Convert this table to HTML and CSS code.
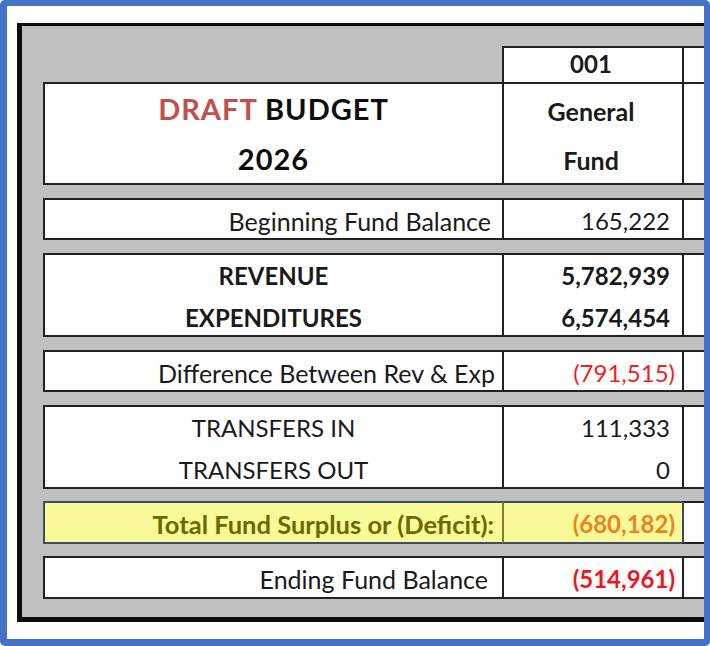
FILE: index.html
```html
<!DOCTYPE html>
<html lang="en">
<head>
<meta charset="utf-8">
<title>Draft Budget 2026</title>
<link rel="stylesheet" href="styles.css">
</head>
<body>
<div class="frame">
  <div class="panel">
    <div class="row row-code">
      <div class="cell lbl blank"></div>
      <div class="cell val center code">001</div>
      <div class="cell ext"></div>
    </div>
    <div class="row row-head">
      <div class="cell lbl title">
        <div class="title-line"><span class="draft">DRAFT</span> BUDGET</div>
        <div class="title-line">2026</div>
      </div>
      <div class="cell val center fundname">
        <div class="fund-line">General</div>
        <div class="fund-line">Fund</div>
      </div>
      <div class="cell ext"></div>
    </div>
    <div class="row row-single">
      <div class="cell lbl right wide pad-begin">Beginning Fund Balance</div>
      <div class="cell val num"><span class="pos">165,222</span></div>
      <div class="cell ext"></div>
    </div>
    <div class="row row-double">
      <div class="cell lbl center bold">
        <div class="line">REVENUE</div>
        <div class="line">EXPENDITURES</div>
      </div>
      <div class="cell val num bold">
        <div class="line"><span class="pos">5,782,939</span></div>
        <div class="line"><span class="pos">6,574,454</span></div>
      </div>
      <div class="cell ext"></div>
    </div>
    <div class="row row-single">
      <div class="cell lbl right wide pad-diff">Difference Between Rev &amp; Exp</div>
      <div class="cell val num neg">(791,515)</div>
      <div class="cell ext"></div>
    </div>
    <div class="row row-double">
      <div class="cell lbl center">
        <div class="line">TRANSFERS IN</div>
        <div class="line">TRANSFERS OUT</div>
      </div>
      <div class="cell val num">
        <div class="line"><span class="pos">111,333</span></div>
        <div class="line"><span class="pos">0</span></div>
      </div>
      <div class="cell ext"></div>
    </div>
    <div class="row row-single row-total">
      <div class="cell lbl right pad-total total-lbl">Total Fund Surplus or (Deficit):</div>
      <div class="cell val num total-val">(680,182)</div>
      <div class="cell ext"></div>
    </div>
    <div class="row row-single row-end">
      <div class="cell lbl right wide pad-end">Ending Fund Balance</div>
      <div class="cell val num end-val">(514,961)</div>
      <div class="cell ext"></div>
    </div>
  </div>
</div>
</body>
</html>
```

FILE: styles.css
```css
html, body {
  margin: 0;
  padding: 0;
  background: #ffffff;
}

.frame {
  box-sizing: border-box;
  width: 710px;
  height: 646px;
  border: 6px solid #4472c4;
  border-left-width: 7px;
  border-bottom-width: 7px;
  border-radius: 5px;
  background: #ffffff;
  overflow: hidden;
  padding: 17px 0 0 10px;
  font-family: "Lato", "Liberation Sans", sans-serif;
  font-size: 24px;
  color: #1a1a1a;
}

.panel {
  width: 900px;
  background: #c0c0c0;
  border-left: 5px solid #0d0d0d;
  border-top: 3px solid #0d0d0d;
  border-bottom: 5px solid #0d0d0d;
  padding: 20px 0 18px 21px;
}

.row {
  display: flex;
  margin-top: 13px;
}

.cell {
  box-sizing: border-box;
  border: 2px solid #222222;
  background: #ffffff;
  white-space: nowrap;
  overflow: visible;
}

.cell + .cell {
  margin-left: -2px;
}

.lbl { width: 461px; }
.val { width: 182px; }
.ext { width: 220px; }

.blank {
  background: transparent;
  border-color: transparent;
}

.center { text-align: center; }
.right { text-align: right; }
.bold { font-weight: 700; }

/* code row */
.row-code {
  margin-top: 0;
  height: 38px;
}
.code {
  font-weight: 700;
  line-height: 30px;
  padding-top: 1px;
  padding-right: 4px;
}

/* header row */
.row-head {
  margin-top: -2px;
  height: 103px;
}
.title {
  text-align: center;
  font-weight: 700;
  font-size: 29px;
  letter-spacing: 1px;
  color: #0d0d0d;
}
.title-line {
  line-height: 50px;
}
.draft {
  color: #c0504d;
}
.fundname {
  font-weight: 700;
  font-size: 25px;
  padding-top: 3px;
  padding-right: 4px;
}
.fund-line {
  line-height: 49px;
}

/* single-line rows */
.row-single {
  height: 42px;
}
.row-single .cell {
  line-height: 30px;
  padding-top: 6px;
}
.row-total,
.row-end {
  margin-top: 12px;
  height: 43px;
}

/* double-line rows */
.row-double {
  height: 84px;
}
.row-double .line {
  line-height: 42px;
}

/* mixed-case labels run a little wider */
.wide {
  font-size: 25px;
}

/* label paddings */
.pad-begin { padding-right: 11px; }
.pad-diff { padding-right: 7px; }
.pad-total { padding-right: 8px; }
.pad-end { padding-right: 14px; }

/* numbers */
.num {
  text-align: right;
  padding-right: 7px;
}
.pos {
  display: inline-block;
  padding-right: 5px;
}
.neg {
  color: #f21d1d;
}

/* total row */
.row-total .lbl,
.row-total .val {
  background: #f8f998;
  border-color: #3e4c60;
}
.row-total .val {
  border-left-color: #7f7f2e;
}
.total-lbl {
  color: #6a6a00;
  font-weight: 700;
  font-size: 25.5px;
}
.total-val {
  color: #ef8220;
  font-weight: 700;
}
.row-total .ext {
  border-left-color: #3e4c60;
}

/* ending row */
.end-val {
  color: #ec1622;
  font-weight: 700;
}
```
